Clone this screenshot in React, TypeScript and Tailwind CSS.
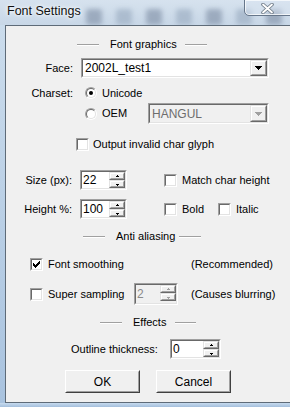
import type { ReactNode } from "react";
import clsx from "clsx";

// Windows classic 3D edges
function Sunken({
  className,
  inner,
  children,
}: {
  className?: string;
  inner?: string;
  children?: ReactNode;
}) {
  return (
    <div
      className={clsx(
        "border border-t-[#a0a0a0] border-l-[#a0a0a0] border-r-white border-b-white",
        className,
      )}
    >
      <div
        className={clsx(
          "flex h-full w-full border border-t-[#696969] border-l-[#696969] border-r-[#e3e3e3] border-b-[#e3e3e3]",
          inner,
        )}
      >
        {children}
      </div>
    </div>
  );
}

function Raised({ className, children }: { className?: string; children?: ReactNode }) {
  return (
    <div
      className={clsx(
        "border border-t-[#e3e3e3] border-l-[#e3e3e3] border-r-[#696969] border-b-[#696969] bg-[#f0f0f0]",
        className,
      )}
    >
      <div className="flex h-full w-full items-center justify-center border border-t-white border-l-white border-r-[#a0a0a0] border-b-[#a0a0a0]">
        {children}
      </div>
    </div>
  );
}

function Check({ checked = false }: { checked?: boolean }) {
  const px = [
    [6, 0, 1],
    [5, 1, 2],
    [0, 2, 1],
    [4, 2, 3],
    [0, 3, 2],
    [3, 3, 3],
    [0, 4, 5],
    [1, 5, 3],
    [2, 6, 1],
  ];
  return (
    <Sunken className="h-[13px] w-[13px] shrink-0" inner="bg-white">
      {checked && (
        <svg width="9" height="9" viewBox="0 0 9 9" shapeRendering="crispEdges">
          {px.map(([x, y, w], i) => (
            <rect key={i} x={x + 1} y={y + 1} width={w} height={1} fill="#000" />
          ))}
        </svg>
      )}
    </Sunken>
  );
}

function Radio({ on = false }: { on?: boolean }) {
  return (
    <div className="h-[12px] w-[12px] shrink-0 rounded-full border border-t-[#a0a0a0] border-l-[#a0a0a0] border-r-white border-b-white">
      <div className="flex h-full w-full items-center justify-center rounded-full border border-t-[#696969] border-l-[#696969] border-r-[#e3e3e3] border-b-[#e3e3e3] bg-white">
        {on && <div className="h-[4px] w-[4px] rounded-full bg-black" />}
      </div>
    </div>
  );
}

function Arrow({ up, color = "#000" }: { up?: boolean; color?: string }) {
  return (
    <svg width="5" height="3" viewBox="0 0 5 3" shapeRendering="crispEdges">
      {up ? (
        <>
          <rect x="2" y="0" width="1" height="1" fill={color} />
          <rect x="1" y="1" width="3" height="1" fill={color} />
        </>
      ) : (
        <>
          <rect x="1" y="1" width="3" height="1" fill={color} />
          <rect x="2" y="2" width="1" height="1" fill={color} />
        </>
      )}
    </svg>
  );
}

function Spin({
  value,
  className,
  disabled,
}: {
  value: string;
  className: string;
  disabled?: boolean;
}) {
  const c = disabled ? "#a0a0a0" : "#000";
  return (
    <Sunken className={clsx("shrink-0", className)} inner={disabled ? "bg-[#f0f0f0]" : "bg-white"}>
      <div
        className={clsx(
          "flex flex-1 items-center pl-[1px] text-[12px] leading-none",
          disabled ? "text-[#8a8a8a]" : "text-black",
        )}
      >
        {value}
      </div>
      <div className="flex w-[16px] flex-col">
        <Raised className="h-[8px] w-full">
          <Arrow up color={c} />
        </Raised>
        <Raised className="h-[8px] w-full">
          <Arrow color={c} />
        </Raised>
      </div>
    </Sunken>
  );
}

function Combo({
  value,
  className,
  disabled,
}: {
  value: string;
  className: string;
  disabled?: boolean;
}) {
  const c = disabled ? "#a0a0a0" : "#000";
  return (
    <Sunken className={clsx("shrink-0", className)} inner={disabled ? "bg-[#f0f0f0]" : "bg-white"}>
      <div
        className={clsx(
          "flex flex-1 items-center pl-[2px] text-[12px] leading-none",
          disabled ? "text-[#6d6d6d]" : "text-black",
        )}
      >
        {value}
      </div>
      <Raised className="h-full w-[17px]">
        <svg width="7" height="4" viewBox="0 0 7 4" shapeRendering="crispEdges">
          <rect x="0" y="0" width="7" height="1" fill={c} />
          <rect x="1" y="1" width="5" height="1" fill={c} />
          <rect x="2" y="2" width="3" height="1" fill={c} />
          <rect x="3" y="3" width="1" height="1" fill={c} />
        </svg>
      </Raised>
    </Sunken>
  );
}

function Rule({ className }: { className: string }) {
  return <div className={clsx("h-[2px] shrink-0 border-t border-t-[#a0a0a0] border-b border-b-white", className)} />;
}

function Header({
  title,
  lead,
  textWidth,
  line2,
}: {
  title: string;
  lead: string;
  textWidth: string;
  line2: string;
}) {
  return (
    <div className="flex h-[13px] items-center">
      <Rule className={clsx(lead, "w-[22px]")} />
      <span className={clsx("ml-[11px] shrink-0 leading-none", textWidth)}>{title}</span>
      <Rule className={line2} />
    </div>
  );
}

function Button({ label }: { label: string }) {
  return (
    <div className="h-[23px] w-[75px] shrink-0 border border-t-white border-l-white border-r-[#404040] border-b-[#404040] bg-[#f0f0f0]">
      <div className="flex h-full w-full items-center justify-center border border-t-[#f0f0f0] border-l-[#f0f0f0] border-r-[#a0a0a0] border-b-[#a0a0a0] text-[12px]">
        {label}
      </div>
    </div>
  );
}

function TitleBar() {
  const blobs = [86, 116, 146, 176, 206, 236, 266];
  return (
    <div className="relative flex h-[25px] shrink-0 bg-gradient-to-b from-[#d6e2ee] to-[#c8d7e7]">
      {/* blurred desktop behind the glass */}
      <svg className="absolute inset-0" width="290" height="25">
        <defs>
          <filter id="b" x="-50%" y="-50%" width="200%" height="200%">
            <feGaussianBlur stdDeviation="2.5" />
          </filter>
        </defs>
        {blobs.map((x, i) => (
          <rect
            key={x}
            x={x}
            y={9}
            width={16}
            height={16}
            rx={3}
            fill={i % 2 ? "#9fb0c4" : "#8898ad"}
            opacity={0.7}
            filter="url(#b)"
          />
        ))}
      </svg>
      <div className="relative flex-1 pl-[7px] pt-[4px] text-[12.5px] leading-[14px] text-[#111] [text-shadow:0_0_6px_#fff,0_0_3px_#fff]">
        Font Settings
      </div>
      <div className="relative -mr-[2px] -mt-px flex h-[17px] w-[48px] shrink-0 items-center justify-center rounded-bl-[5px] border border-[#66768a] bg-[#dbe6f2]/40 shadow-[inset_0_0_0_1px_rgba(255,255,255,0.7)]">
        <svg width="13" height="11" viewBox="0 0 13 11" className="-ml-[2px] mt-[1px]">
          <path d="M2 1.5 L11 9.5 M11 1.5 L2 9.5" stroke="#6f7b88" strokeWidth="3.6" strokeLinecap="round" />
          <path d="M2 1.5 L11 9.5 M11 1.5 L2 9.5" stroke="#fff" strokeWidth="1.8" strokeLinecap="round" />
        </svg>
      </div>
    </div>
  );
}

export default function App() {
  return (
    <div className="flex h-[407px] w-[290px] flex-col overflow-hidden whitespace-nowrap bg-[#bcd0e6] font-['Liberation_Sans',Arial,sans-serif] text-[11px] text-black">
      <TitleBar />
      <div className="flex flex-1">
        <div className="w-[5px] shrink-0 bg-gradient-to-b from-[#cbdcec] to-[#a9c3df]" />
        <div className="flex flex-1 flex-col border-t border-l border-b border-[#5e6b78] bg-[#f0f0f0]">
          {/* Font graphics */}
          <div className="mt-[12px]">
            <Header title="Font graphics" lead="ml-[71px]" textWidth="w-[75px]" line2="w-[22px]" />
          </div>

          <div className="mt-[7px] flex h-[20px] items-center">
            <span className="w-[67px] text-right">Face:</span>
            <Combo value="2002L_test1" className="ml-[8px] h-[20px] w-[188px]" />
          </div>

          <div className="mt-[5px] flex h-[20px] items-center">
            <span className="w-[67px] text-right">Charset:</span>
            <div className="ml-[12px]">
              <Radio on />
            </div>
            <span className="ml-[5px]">Unicode</span>
          </div>

          <div className="flex h-[21px] items-center">
            <div className="ml-[79px]">
              <Radio />
            </div>
            <span className="ml-[5px] w-[46px] shrink-0">OEM</span>
            <Combo value="HANGUL" className="h-[21px] w-[121px]" disabled />
          </div>

          <div className="mt-[10px] flex h-[20px] items-center">
            <div className="ml-[70px]">
              <Check />
            </div>
            <span className="ml-[4px]">Output invalid char glyph</span>
          </div>

          <div className="mt-[16px] flex h-[20px] items-center">
            <span className="w-[66px] text-right">Size (px):</span>
            <Spin value="22" className="ml-[8px] h-[20px] w-[47px]" />
            <div className="ml-[37px]">
              <Check />
            </div>
            <span className="ml-[5px]">Match char height</span>
          </div>

          <div className="mt-[9px] flex h-[20px] items-center">
            <span className="w-[66px] text-right">Height %:</span>
            <Spin value="100" className="ml-[8px] h-[20px] w-[47px]" />
            <div className="ml-[37px]">
              <Check />
            </div>
            <span className="ml-[5px] w-[36px] shrink-0">Bold</span>
            <Check />
            <span className="ml-[5px]">Italic</span>
          </div>

          {/* Anti aliasing */}
          <div className="mt-[11px]">
            <Header title="Anti aliasing" lead="ml-[77px]" textWidth="w-[63px]" line2="w-[22px]" />
          </div>

          <div className="mt-[11px] flex h-[20px] items-center">
            <div className="ml-[24px]">
              <Check checked />
            </div>
            <span className="ml-[5px] w-[143px] shrink-0">Font smoothing</span>
            <span>(Recommended)</span>
          </div>

          <div className="mt-[9px] flex h-[22px] items-center">
            <div className="ml-[24px]">
              <Check />
            </div>
            <span className="ml-[5px] w-[86px] shrink-0">Super sampling</span>
            <Spin value="2" className="h-[22px] w-[44px]" disabled />
            <span className="ml-[13px]">(Causes blurring)</span>
          </div>

          {/* Effects */}
          <div className="mt-[11px]">
            <Header title="Effects" lead="ml-[94px]" textWidth="w-[42px]" line2="w-[21px]" />
          </div>

          <div className="mt-[10px] flex h-[20px] items-center">
            <span className="ml-[65px] w-[99px] shrink-0">Outline thickness:</span>
            <Spin value="0" className="h-[20px] w-[51px]" />
          </div>

          <div className="mt-[11px] flex items-center">
            <div className="ml-[59px]">
              <Button label="OK" />
            </div>
            <div className="ml-[16px]">
              <Button label="Cancel" />
            </div>
          </div>
        </div>
      </div>
      <div className="h-[4px] shrink-0 bg-gradient-to-b from-[#c7dbef] to-[#a4bfdc]" />
    </div>
  );
}
